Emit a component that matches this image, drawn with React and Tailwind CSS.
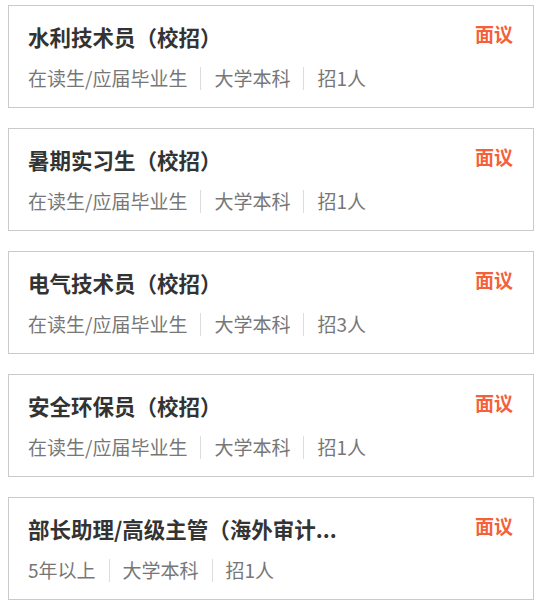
import React from "react";

const jobs = [
  { title: "水利技术员（校招）", tags: ["在读生/应届毕业生", "大学本科", "招1人"] },
  { title: "暑期实习生（校招）", tags: ["在读生/应届毕业生", "大学本科", "招1人"] },
  { title: "电气技术员（校招）", tags: ["在读生/应届毕业生", "大学本科", "招3人"] },
  { title: "安全环保员（校招）", tags: ["在读生/应届毕业生", "大学本科", "招1人"] },
  { title: "部长助理/高级主管（海外审计...", tags: ["5年以上", "大学本科", "招1人"] },
];

export default function App() {
  return (
    <div
      className="bg-white w-[539px] h-[604px] overflow-hidden pt-[5px] pl-[8px]"
      style={{ fontFamily: '"Noto Sans CJK SC", "Noto Sans", sans-serif' }}
    >
      <div className="flex flex-col gap-[20px] w-[526px]">
        {jobs.map((j, i) => (
          <div key={i} className="border border-[#cacaca] h-[103px] pl-[19px] pr-[20px] pt-[17px]">
            <div className="flex items-start justify-between">
              <div className="text-[21.5px] leading-[28px] font-bold text-[#333333]">{j.title}</div>
              <div className="text-[19px] leading-[24px] font-bold text-[#f5603a] mt-[-1px]">面议</div>
            </div>
            <div className="flex items-center mt-[15px] text-[19px] leading-[24px] text-[#777777]">
              {j.tags.map((t, k) => (
                <React.Fragment key={k}>
                  {k > 0 && <div className="w-px h-[23px] bg-[#dddddd] mx-[13px]" />}
                  <span>{t}</span>
                </React.Fragment>
              ))}
            </div>
          </div>
        ))}
      </div>
    </div>
  );
}
